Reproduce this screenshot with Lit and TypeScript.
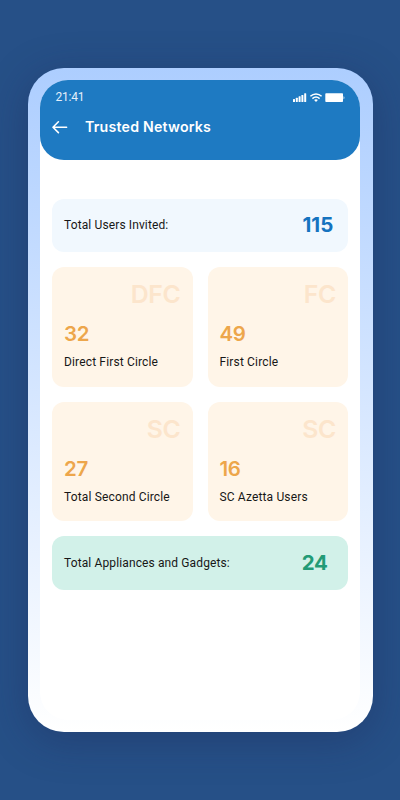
import { LitElement, html, css } from "lit";
import { customElement, property } from "lit/decorators.js";

@customElement("stat-card")
class StatCard extends LitElement {
  @property() tag = "";
  @property() value = "";
  @property() label = "";

  static styles = css`
    :host {
      display: flex;
      flex-direction: column;
      box-sizing: border-box;
      height: 119.8px;
      padding: 12px 12px 0;
      border-radius: 12px;
      background: #fff5e8;
      white-space: nowrap;
    }
    .tag {
      align-self: flex-end;
      font-family: Inter, sans-serif;
      font-size: 24.8px;
      line-height: 30px;
      font-weight: 600;
      letter-spacing: -0.3px;
      color: #fce5cc;
    }
    .value {
      margin-top: 12px;
      font-family: Inter, sans-serif;
      font-size: 20.5px;
      line-height: 26px;
      font-weight: 600;
      letter-spacing: -0.3px;
      color: #eda64b;
    }
    .label {
      margin-top: 7px;
      font-size: 12px;
      line-height: 16px;
      letter-spacing: 0.15px;
    }
  `;

  render() {
    return html`
      <div class="tag">${this.tag}</div>
      <div class="value">${this.value}</div>
      <div class="label">${this.label}</div>
    `;
  }
}

@customElement("app-root")
class AppRoot extends LitElement {
  static styles = css`
    :host {
      display: flex;
      justify-content: center;
      box-sizing: border-box;
      width: 400px;
      height: 800px;
      padding-top: 68px;
      overflow: hidden;
      background: #265087;
      font-family: Roboto, "Liberation Sans", sans-serif;
      color: #171717;
    }
    .phone {
      box-sizing: border-box;
      width: 345px;
      height: 664px;
      padding: 12px 12.5px;
      border-radius: 36px;
      background: linear-gradient(#adceff, #ffffff);
      box-shadow: 0 8px 40px rgba(28, 35, 80, 0.35);
    }
    .screen {
      height: 640px;
      border-radius: 28px;
      overflow: hidden;
      background: #fff;
    }
    header {
      box-sizing: border-box;
      height: 80px;
      padding: 10px 15px 0 12px;
      border-radius: 0 0 24px 24px;
      background: #1e7ac2;
      color: #fff;
    }
    .status {
      display: flex;
      align-items: center;
      justify-content: space-between;
      height: 15px;
      padding-left: 3.5px;
    }
    .time {
      font-size: 12px;
      line-height: 15px;
      letter-spacing: -0.2px;
      color: #e4effa;
    }
    svg {
      display: block;
    }
    .bar {
      display: flex;
      align-items: center;
      gap: 17px;
      margin-top: 12px;
      height: 20px;
    }
    .title {
      font-family: Inter, sans-serif;
      font-size: 14.2px;
      line-height: 20px;
      font-weight: 600;
      letter-spacing: 0.2px;
      white-space: nowrap;
    }
    main {
      display: grid;
      grid-template-columns: 1fr 1fr;
      gap: 15px;
      padding: 38.6px 12px 0;
    }
    .total {
      grid-column: 1 / -1;
      display: flex;
      align-items: center;
      justify-content: space-between;
      box-sizing: border-box;
      height: 53.3px;
      padding: 0 14.5px 0 12px;
      border-radius: 12px;
      background: #f1f8fe;
    }
    .total.green {
      padding-right: 20.5px;
      background: #d2f1e9;
    }
    .caption {
      font-size: 12px;
      line-height: 16px;
      letter-spacing: 0.12px;
    }
    .sum {
      font-family: Inter, sans-serif;
      font-size: 20.5px;
      line-height: 26px;
      font-weight: 700;
      letter-spacing: 0.1px;
      color: #1573bf;
    }
    .green .sum {
      letter-spacing: -0.3px;
      color: #229b76;
    }
  `;

  render() {
    return html`
      <div class="phone">
        <div class="screen">
          <header>
            <div class="status">
              <span class="time">21:41</span>
              <svg width="52" height="11" viewBox="0 0 52 11" fill="#fff">
                <rect x="0" y="7" width="2" height="3" rx=".5" />
                <rect x="2.8" y="5.7" width="2" height="4.3" rx=".5" />
                <rect x="5.6" y="4.3" width="2" height="5.7" rx=".5" />
                <rect x="8.4" y="3" width="2" height="7" rx=".5" />
                <rect x="11.2" y="1.3" width="2" height="8.7" rx=".5" />
                <g fill="none" stroke="#fff" stroke-width="1.5">
                  <path d="M17.4 4.2C20.6 1.1 25.4 1.1 28.6 4.2" />
                  <path d="M19.4 6.6C21.5 4.7 24.5 4.7 26.6 6.6" />
                </g>
                <path d="M21.1 8.1C22.2 7.1 23.8 7.1 24.9 8.1L23 10Z" />
                <rect x="32.3" y="1.3" width="17.7" height="8.8" rx=".8" />
                <path d="M50.4 4.2Q51.6 4.6 51.6 5.7T50.4 7.2Z" opacity=".6" />
              </svg>
            </div>
            <div class="bar">
              <svg width="16" height="14" viewBox="0 0 16 14" fill="none" stroke="#fff" stroke-width="1.6" stroke-linecap="round" stroke-linejoin="round">
                <path d="M14.6 7.2H1.2M6.4 1.8L1 7.2L6.4 12.6" />
              </svg>
              <span class="title">Trusted Networks</span>
            </div>
          </header>
          <main>
            <div class="total">
              <span class="caption">Total Users Invited:</span>
              <span class="sum">115</span>
            </div>
            <stat-card tag="DFC" value="32" label="Direct First Circle"></stat-card>
            <stat-card tag="FC" value="49" label="First Circle"></stat-card>
            <stat-card tag="SC" value="27" label="Total Second Circle"></stat-card>
            <stat-card tag="SC" value="16" label="SC Azetta Users"></stat-card>
            <div class="total green">
              <span class="caption">Total Appliances and Gadgets:</span>
              <span class="sum">24</span>
            </div>
          </main>
        </div>
      </div>
    `;
  }
}
